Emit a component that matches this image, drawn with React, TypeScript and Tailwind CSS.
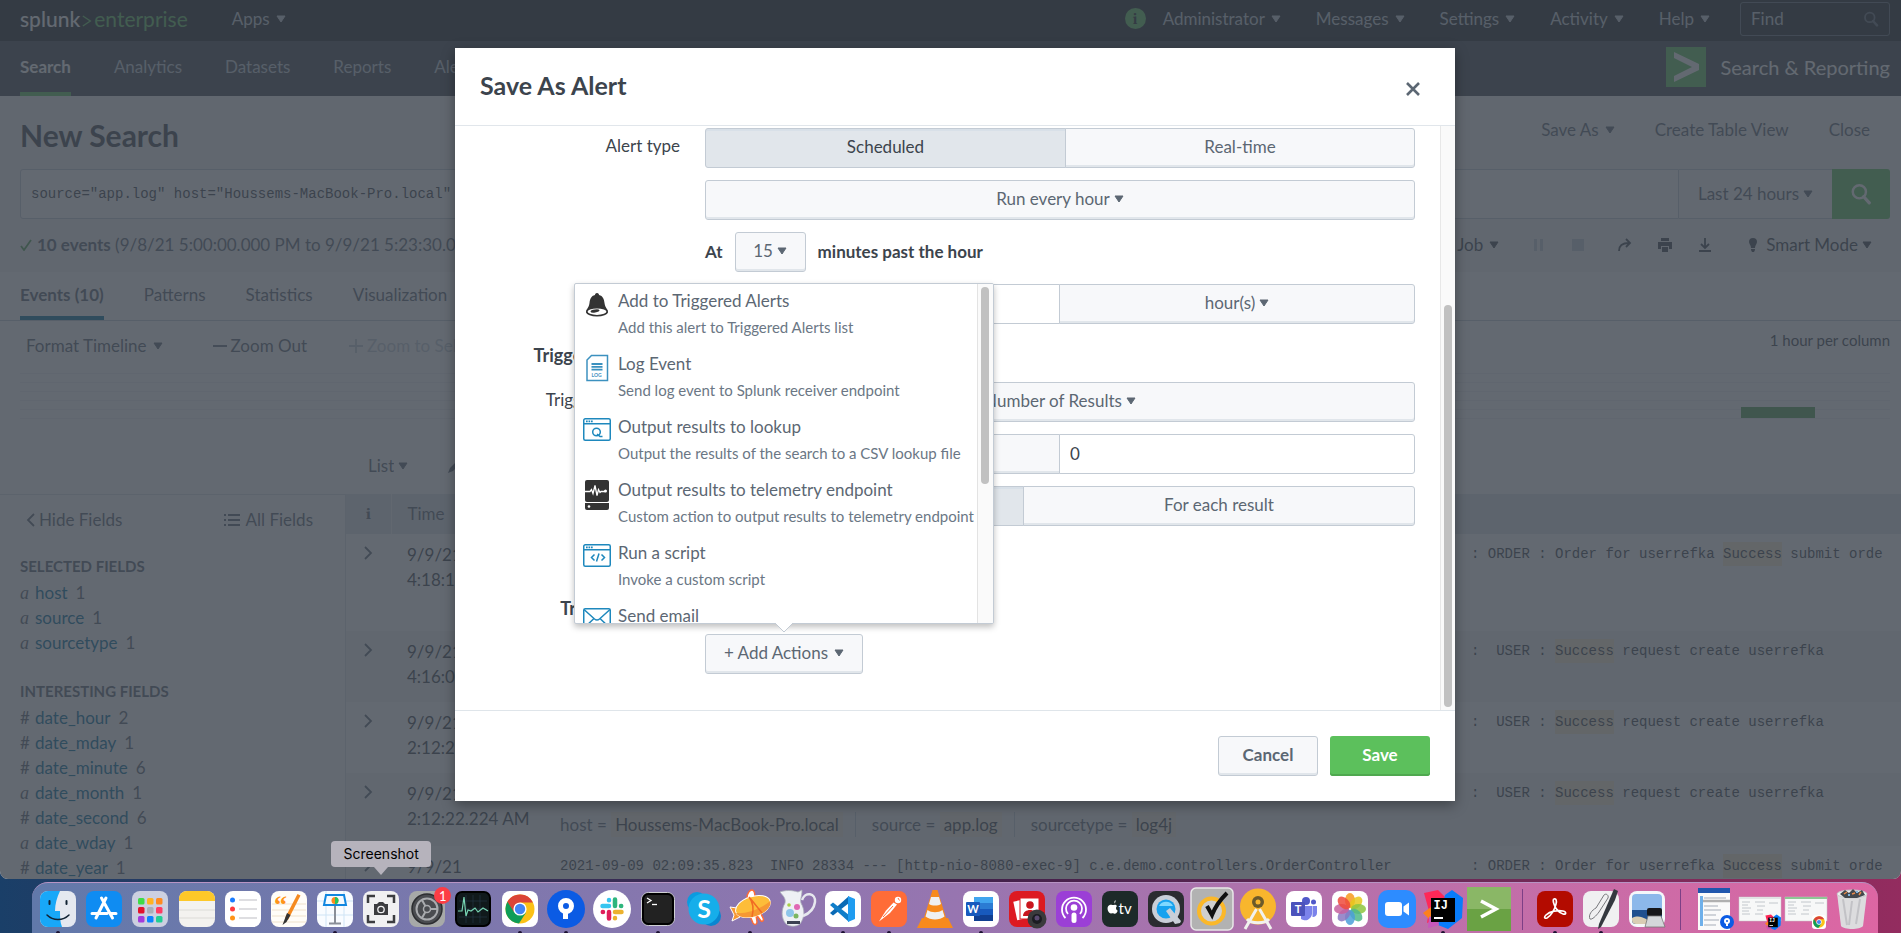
import type { ReactNode } from "react";

const Caret = ({ className = "" }: { className?: string }) => (
  <svg viewBox="0 0 10 8" className={`h-2 w-[10px] shrink-0 ${className}`} aria-hidden="true">
    <path d="M1 1h8L5 7z" fill="currentColor" stroke="currentColor" strokeLinejoin="round" />
  </svg>
);

const Magnifier = ({ className = "" }: { className?: string }) => (
  <svg viewBox="0 0 20 20" className={className} fill="none" stroke="currentColor" aria-hidden="true">
    <circle cx="8.5" cy="8" r="6" strokeWidth="2.2" />
    <path d="M12.5 12.5l5 5.5" strokeWidth="3" strokeLinecap="round" />
  </svg>
);

function MenuButton({ children }: { children: ReactNode }) {
  return (
    <button type="button" aria-haspopup="menu" className="flex items-center gap-[6px] whitespace-nowrap">
      {children}
      <Caret />
    </button>
  );
}

function Picker({ label, options, className = "" }: { label: string; options: string[]; className?: string }) {
  return (
    <div className={`flex items-center justify-center gap-1 ${className}`}>
      <select aria-label={label} className="appearance-none bg-transparent text-center outline-none [field-sizing:content]">
        {options.map((o) => (
          <option key={o}>{o}</option>
        ))}
      </select>
      <Caret />
    </div>
  );
}

/* ---------- page behind the dialog ---------- */

function TopBar() {
  return (
    <header className="flex h-[41px] items-center bg-[#171d21] pb-1 pl-5 pr-[11px] text-[#c3cbd4]">
      <a href="#home" className="flex items-center text-[21px] leading-6 text-white">
        <span className="font-medium">splunk</span>
        <svg viewBox="0 0 12 16" className="mx-[2px] mt-1 h-4 w-[10px]" fill="none" stroke="#5cc05c" strokeWidth="1.6" aria-hidden="true">
          <path d="M1 2l9 6-9 6" />
        </svg>
        <span className="text-[#5cc05c]">enterprise</span>
      </a>
      <div className="ml-11">
        <MenuButton>Apps</MenuButton>
      </div>
      <nav className="ml-auto flex items-center gap-[35px]">
        <div className="flex items-center gap-[17px]">
          <span className="flex size-[21px] items-center justify-center rounded-full bg-[#5cc05c] font-serif text-[15px] font-bold text-[#171d21]">i</span>
          <MenuButton>Administrator</MenuButton>
        </div>
        <MenuButton>Messages</MenuButton>
        <MenuButton>Settings</MenuButton>
        <MenuButton>Activity</MenuButton>
        <MenuButton>Help</MenuButton>
      </nav>
      <div className="ml-[30px] flex h-[34px] w-[150px] items-center rounded-[3px] border border-[#5c6773] px-[10px]">
        <input aria-label="Find" placeholder="Find" className="w-0 flex-1 bg-transparent placeholder:text-[#c3cbd4]" />
        <Magnifier className="size-4 text-[#5c6773]" />
      </div>
    </header>
  );
}

function AppNav() {
  return (
    <nav className="flex h-[55px] items-stretch bg-[#3c444d] pl-5 pr-[11px] text-[#c3cbd4]">
      <div className="flex gap-[43px]">
        <a href="#search" className="flex items-center border-b-4 border-[#5cc05c] pb-1 pt-1 font-bold text-white">Search</a>
        {["Analytics", "Datasets", "Reports", "Alerts"].map((t) => (
          <a key={t} href={`#${t.toLowerCase()}`} className="flex items-center pb-1">{t}</a>
        ))}
      </div>
      <div className="ml-auto flex items-center gap-[15px] pb-1 text-xl text-white">
        <svg viewBox="0 0 40 40" className="size-10" aria-hidden="true">
          <rect width="40" height="40" fill="#5cc05c" />
          <path d="M8 5l25 12v6L8 35v-6l18-9L8 11z" fill="#fff" />
        </svg>
        Search &amp; Reporting
      </div>
    </nav>
  );
}

function JobControls() {
  return (
    <div className="ml-auto flex items-center text-[#3c444d]">
      <MenuButton>Job</MenuButton>
      <svg viewBox="0 0 12 12" className="ml-[34px] size-3 text-[#c3cbd4]" fill="currentColor"><path d="M1 0h3v12H1zM7 0h3v12H7z" /></svg>
      <svg viewBox="0 0 12 12" className="ml-[27px] size-3 text-[#c3cbd4]" fill="currentColor"><path d="M0 0h12v12H0z" /></svg>
      <svg viewBox="0 0 14 14" className="ml-[34px] size-[14px]" fill="none" stroke="currentColor" strokeWidth="1.8"><path d="M1 13c0-5 3-8 10-8M8 1l4 4-4 4" /></svg>
      <svg viewBox="0 0 14 14" className="ml-[26px] size-[14px]" fill="currentColor"><path d="M3 0h8v3H3zM0 4h14v7h-3V8H3v3H0zM4 9h6v5H4z" /></svg>
      <svg viewBox="0 0 14 14" className="ml-[26px] size-[14px]" fill="none" stroke="currentColor" strokeWidth="1.8"><path d="M7 0v9M3 6l4 4 4-4M1 13h12" /></svg>
      <svg viewBox="0 0 10 14" className="ml-[36px] h-[14px] w-[10px]" fill="currentColor"><path d="M5 0a4 4 0 0 1 4 4c0 2-2 3-2 6H3c0-3-2-4-2-6a4 4 0 0 1 4-4zM3 11h4v1L6 14H4l-1-2z" /></svg>
      <Picker label="Search mode" options={["Smart Mode", "Fast Mode", "Verbose Mode"]} className="ml-2" />
    </div>
  );
}

function SearchSection() {
  return (
    <section className="h-[176px] px-5 pr-[11px]">
      <div className="flex h-[73px] items-center justify-between pt-1">
        <h1 className="text-[30px] font-bold text-[#3c444d]">New Search</h1>
        <div className="flex items-center gap-10 pb-[10px] pr-5">
          <MenuButton>Save As</MenuButton>
          <button type="button">Create Table View</button>
          <button type="button">Close</button>
        </div>
      </div>
      <div className="flex h-[50px]">
        <input
          aria-label="Search query"
          defaultValue={'source="app.log" host="Houssems-MacBook-Pro.local" sourcetype="log4j"'}
          className="min-w-0 flex-1 rounded-l-[3px] border border-[#c3cbd4] bg-white px-[10px] font-['Liberation_Mono',monospace] text-sm text-[#3c444d]"
        />
        <Picker label="Time range" options={["Last 24 hours", "All time"]} className="w-[153px] border-y border-[#c3cbd4] bg-[#f7f8fa]" />
        <button type="button" aria-label="Run search" className="flex w-[58px] items-center justify-center rounded-r-[3px] bg-[#5cc05c] text-white">
          <Magnifier className="size-[22px]" />
        </button>
      </div>
      <div className="flex h-[53px] items-center pb-[2px] pr-[18px]">
        <svg viewBox="0 0 12 12" className="mr-[5px] size-3" fill="none" stroke="#53a051" strokeWidth="1.8"><path d="M1 7l3 4 7-10" /></svg>
        <p className="whitespace-nowrap"><strong>10 events</strong> (9/8/21 5:00:00.000 PM to 9/9/21 5:23:30.000 PM)</p>
        <JobControls />
      </div>
    </section>
  );
}

function Timeline() {
  return (
    <section>
      <div role="tablist" className="flex h-[49px] items-stretch gap-10 border-b border-[#c3cbd4] px-5 pt-[2px]">
        <button type="button" role="tab" aria-selected="true" className="border-b-4 border-[#006d9c] font-bold">Events (10)</button>
        {["Patterns", "Statistics", "Visualization"].map((t) => (
          <button key={t} type="button" role="tab" aria-selected="false" className="pb-1">{t}</button>
        ))}
      </div>
      <div className="flex h-[52px] items-center pl-[26px] pr-[11px] pb-[2px]">
        <MenuButton>Format Timeline</MenuButton>
        <button type="button" className="ml-[50px] flex items-center gap-1">
          <svg viewBox="0 0 14 14" className="size-[14px]" stroke="currentColor" strokeWidth="1.8"><path d="M0 7h14" /></svg>
          Zoom Out
        </button>
        <button type="button" className="ml-[42px] flex items-center gap-1 text-[#c3cbd4]">
          <svg viewBox="0 0 14 14" className="size-[14px]" stroke="currentColor" strokeWidth="1.8"><path d="M0 7h14M7 0v14" /></svg>
          Zoom to Selection
        </button>
        <span className="ml-auto pb-3 text-[15px] text-[#3c444d]">1 hour per column</span>
      </div>
      <svg viewBox="0 0 1870 46" preserveAspectRatio="none" className="ml-5 block h-[46px] w-[calc(100%-31px)]" aria-label="Events over time">
        {[0, 9, 18, 27, 36, 45].map((y) => (
          <rect key={y} y={y} width="1870" height="1" fill="#eef1f3" />
        ))}
        <rect x="1721" y="34" width="74" height="11" fill="#53a051" />
      </svg>
      <div className="flex h-[75px] items-center gap-10 pl-[368px] pt-[18px]">
        <Picker label="Display" options={["List", "Raw", "Table"]} />
        <button type="button" className="flex items-center gap-1">
          <svg viewBox="0 0 14 14" className="size-[14px]" fill="currentColor"><path d="M0 14l2-5 8-8 3 3-8 8z" /></svg>
          Format
        </button>
      </div>
    </section>
  );
}

type Field = [kind: "a" | "#", name: string, count: number];
const selectedFields: Field[] = [["a", "host", 1], ["a", "source", 1], ["a", "sourcetype", 1]];
const interestingFields: Field[] = [
  ["#", "date_hour", 2], ["#", "date_mday", 1], ["#", "date_minute", 6], ["a", "date_month", 1],
  ["#", "date_second", 6], ["a", "date_wday", 1], ["#", "date_year", 1],
];

function FieldGroup({ title, fields }: { title: string; fields: Field[] }) {
  return (
    <div>
      <h2 className="mb-1 text-[15px] font-bold leading-5">{title}</h2>
      <ul>
        {fields.map(([kind, name, count]) => (
          <li key={name} className="flex h-[25px] items-center">
            <span className={kind === "a" ? "w-[15px] font-['Liberation_Serif',serif] text-lg italic" : "w-[15px]"}>{kind}</span>
            <a href={`#${name}`} className="text-[#006d9c]">{name}</a>
            <span className="ml-2">{count}</span>
          </li>
        ))}
      </ul>
    </div>
  );
}

const Hit = ({ children }: { children: ReactNode }) => <span className="bg-[#ffeecf] py-1">{children}</span>;

const userMessage = <>:&nbsp; USER : <Hit>Success</Hit> request create userrefka</>;
const orderMessage = <>: ORDER : Order for userrefka <Hit>Success</Hit> submit orde</>;

const events = [
  { time: "4:18:11.912 PM", log: "2021-09-09 16:18:11.912", message: orderMessage, height: "h-[97px]" },
  { time: "4:16:00.120 PM", log: "2021-09-09 16:16:00.120", message: userMessage, height: "h-[71px]" },
  { time: "2:12:22.225 AM", log: "2021-09-09 02:12:22.225", message: userMessage, height: "h-[71px]" },
  { time: "2:12:22.224 AM", log: "2021-09-09 02:12:22.224", message: userMessage, height: "h-[73px]" },
  { time: "2:09:35.823 AM", log: "2021-09-09 02:09:35.823", message: orderMessage, height: "h-[71px]" },
];

function Results() {
  return (
    <section className="flex">
      <aside className="w-[346px] shrink-0 border-r border-t border-[#d9dfe5] px-5 pr-8">
        <div className="flex h-[50px] items-center justify-between">
          <button type="button" className="ml-[6px] flex items-center gap-1">
            <svg viewBox="0 0 9 14" className="h-[14px] w-[9px]" fill="none" stroke="currentColor" strokeWidth="1.8"><path d="M8 1L2 7l6 6" /></svg>
            Hide Fields
          </button>
          <button type="button" className="flex items-center gap-[6px]">
            <svg viewBox="0 0 16 14" className="h-[14px] w-4" fill="currentColor"><path d="M0 1h2v2H0zM4 1h12v2H4zM0 6h2v2H0zM4 6h12v2H4zM0 11h2v2H0zM4 11h12v2H4z" /></svg>
            All Fields
          </button>
        </div>
        <div className="flex flex-col gap-[26px] pt-[11px]">
          <FieldGroup title="SELECTED FIELDS" fields={selectedFields} />
          <FieldGroup title="INTERESTING FIELDS" fields={interestingFields} />
        </div>
      </aside>
      <div className="min-w-0 flex-1 overflow-hidden">
        <table className="w-full table-fixed border-collapse text-left">
          <colgroup>
            <col className="w-[45px]" />
            <col className="w-[153px]" />
            <col />
          </colgroup>
          <thead>
            <tr className="h-10 bg-[#e1e6eb]">
              <th className="border-r border-[#f7f8fa] text-center font-serif font-bold">i</th>
              <th className="pl-4 font-normal">Time</th>
              <th className="pl-4 font-normal">Event</th>
            </tr>
          </thead>
          <tbody>
            {events.map((e, n) => (
              <tr key={e.time} className={n % 2 ? `bg-[#f2f4f5] align-top ${e.height}` : `align-top ${e.height}`}>
                <td className="pt-3">
                  <button type="button" aria-label="Expand event" className="mx-auto block">
                    <svg viewBox="0 0 9 14" className="h-[14px] w-[9px]" fill="none" stroke="currentColor" strokeWidth="1.8"><path d="M1 1l6 6-6 6" /></svg>
                  </button>
                </td>
                <td className="whitespace-nowrap pl-4 pt-2 leading-[25px] text-[#3c444d]">9/9/21<br />{e.time}</td>
                <td className="pl-4 pt-2">
                  <div className="flex whitespace-nowrap font-['Liberation_Mono',monospace] text-sm leading-[25px] text-[#3c444d]">
                    <span className="w-[911px] shrink-0">{e.log}&nbsp; INFO 28334 --- [http-nio-8080-exec-9] c.e.demo.controllers.OrderController</span>
                    <span>{e.message}</span>
                  </div>
                  <div className="flex items-center whitespace-nowrap pt-[6px] leading-[25px]">
                    host =&nbsp;<span className="bg-[#ffeecf]/60 px-1 text-[#3c444d]">Houssems-MacBook-Pro.local</span>
                    <span className="ml-3 border-l border-[#c3cbd4] pl-4">source =&nbsp;</span><span className="bg-[#ffeecf]/60 px-1 text-[#3c444d]">app.log</span>
                    <span className="ml-3 border-l border-[#c3cbd4] pl-4">sourcetype =&nbsp;</span><span className="bg-[#ffeecf]/60 px-1 text-[#3c444d]">log4j</span>
                  </div>
                </td>
              </tr>
            ))}
          </tbody>
        </table>
      </div>
    </section>
  );
}

/* ---------- dialog ---------- */

const box = "rounded-[3px] border border-[#c3cbd4] bg-[#f7f8fa] shadow-[inset_0_-2px_0_#e1e6eb] pb-[2px]";
const pressed = "rounded-l-[3px] border border-[#c3cbd4] bg-[#e1e6eb] pb-[2px] text-[#3c444d] shadow-[inset_0_2px_0_#d8e0e8]";
const field = "border border-[#c3cbd4] bg-white px-[10px] text-[#3c444d]";

function FormRow({ label, children }: { label?: string; children: ReactNode }) {
  return (
    <div className="flex gap-[25px]">
      <span className="flex h-9 w-[225px] shrink-0 items-center justify-end text-[#3c444d]">{label}</span>
      <div className="flex h-10 w-[710px] items-stretch">{children}</div>
    </div>
  );
}

const PopIcon = {
  bell: (
    <svg viewBox="0 0 28 28" className="h-7 w-7">
      <path d="M14 2c1.500 0 2 1 2 2 4 1 5 4 5.500 8 .5 3 1 4 3 7v3H3.500v-3c2-3 2.500-4 3-7C7 8 8 5 12 4c0-1 .5-2 2-2z" fill="#333" />
      <ellipse cx="14" cy="20.700" rx="10.200" ry="4" fill="#fff" stroke="#333" strokeWidth="1.600" />
      <ellipse cx="12" cy="20" rx="4.500" ry="1.600" fill="#333" transform="rotate(-8 12 20)" />
    </svg>
  ),
  log: (
    <svg viewBox="0 0 28 28" className="h-7 w-7" fill="none" stroke="#3c91bf" strokeWidth="1.500">
      <path d="M8.500 1.500H24.500v25H4V6z" fill="#fff" />
      <path d="M8.500 10h11M8.500 12.800h11M8.500 15.600h11" strokeWidth="1.800" />
      <text x="8.500" y="22.500" fontSize="5" fontWeight="bold" fill="#3c91bf" stroke="none" fontFamily="Lato">LOG</text>
    </svg>
  ),
  lookup: (
    <svg viewBox="0 0 28 28" className="h-7 w-7" fill="none" stroke="#1e88bd" strokeWidth="1.500">
      <rect x=".75" y="1.750" width="26.500" height="21.500" rx="1.500" fill="#fff" />
      <path d="M1 6.800h26" /><path d="M3 4.300h7" strokeDasharray="1.700 .8" strokeWidth="1.800" />
      <circle cx="13.500" cy="15" r="3.800" /><path d="M14 17l3 2.500h2.500" />
    </svg>
  ),
  telemetry: (
    <svg viewBox="0 0 28 30" className="h-[30px] w-7">
      <rect x="2" width="24" height="22" rx="2" fill="#333" />
      <path d="M2 23h24v5a2 2 0 0 1-2 2H4a2 2 0 0 1-2-2z" fill="#333" />
      <path d="M2 11.500h5l1.500-2 1.500 4 2-8 2 10 1.500-6 1.500 3 1-1h4.500" fill="none" stroke="#fff" strokeWidth="1.300" />
      <circle cx="22.500" cy="11" r="1.500" fill="#fff" /><circle cx="6" cy="26.500" r="1.300" fill="#fff" />
    </svg>
  ),
  script: (
    <svg viewBox="0 0 28 28" className="h-7 w-7" fill="none" stroke="#1e88bd" strokeWidth="1.500">
      <rect x=".75" y="1.750" width="26.500" height="21.500" rx="1.500" fill="#fff" />
      <path d="M1 6.800h26" /><path d="M3 4.300h7" strokeDasharray="1.700 .8" strokeWidth="1.800" />
      <path d="M11.500 11.500l-3 3 3 3M18.500 11.500l3 3-3 3M16 10.500l-2.500 8" />
    </svg>
  ),
  mail: (
    <svg viewBox="0 0 28 28" className="h-7 w-7" fill="none" stroke="#1e88bd" strokeWidth="1.500">
      <rect x=".75" y="2.750" width="26.500" height="20" rx="1.500" fill="#fff" />
      <path d="M1 3.500l10.500 9.500q2.500 2 5 0L27 3.500M1 22l10-9.500M27 22l-10-9.500" />
    </svg>
  ),
};

const actions = [
  { icon: PopIcon.bell, title: "Add to Triggered Alerts", text: "Add this alert to Triggered Alerts list" },
  { icon: PopIcon.log, title: "Log Event", text: "Send log event to Splunk receiver endpoint" },
  { icon: PopIcon.lookup, title: "Output results to lookup", text: "Output the results of the search to a CSV lookup file" },
  { icon: PopIcon.telemetry, title: "Output results to telemetry endpoint", text: "Custom action to output results to telemetry endpoint" },
  { icon: PopIcon.script, title: "Run a script", text: "Invoke a custom script" },
  { icon: PopIcon.mail, title: "Send email", text: "" },
];

function ActionsMenu() {
  return (
    <div className="absolute bottom-[50px] left-1/2 z-10 w-[420px] -translate-x-1/2 text-left">
      <div className="flex h-[341px] overflow-hidden rounded-[2px] border border-[#c3cbd4] bg-white shadow-[0_3px_6px_rgba(0,0,0,0.25)]">
        <ul className="min-w-0 flex-1">
          {actions.map((a) => (
            <li key={a.title} className="h-[63px]">
              <button type="button" className="flex w-full gap-[7px] pl-2 text-left">
                <span className="w-7 shrink-0 pt-[7px]">{a.icon}</span>
                <span className="whitespace-nowrap pt-1">
                  <span className="block leading-[26px]">{a.title}</span>
                  <span className="block text-[15px] leading-[26px] text-[#6b7785]">{a.text}</span>
                </span>
              </button>
            </li>
          ))}
        </ul>
        <div className="w-4 border-l border-[#e3e3e3] bg-[#fafafa] pl-[3px] pt-[3px]">
          <div className="h-[197px] w-2 rounded-full bg-[#c1c1c1]" />
        </div>
      </div>
      <svg viewBox="0 0 18 10" className="absolute left-1/2 top-[340px] h-[10px] w-[18px] -translate-x-1/2" aria-hidden="true">
        <path d="M0 0l9 9 9-9" fill="#fff" stroke="#c3cbd4" />
      </svg>
    </div>
  );
}

function SaveAlertDialog() {
  return (
    <div role="dialog" aria-labelledby="dialog-title" className="w-[1000px] max-w-full bg-white text-[#5c6773] shadow-[0_4px_12px_rgba(0,0,0,0.35)]">
      <div className="flex h-[78px] items-center justify-between border-b border-[#e1e6eb] pb-1 pl-[25px] pr-[35px]">
        <h2 id="dialog-title" className="text-[25px] font-bold text-[#3c444d]">Save As Alert</h2>
        <button type="button" aria-label="Close dialog" className="pt-2">
          <svg viewBox="0 0 14 14" className="size-[14px]" fill="none" stroke="#5c6773" strokeWidth="2.600"><path d="M1 1l12 12M13 1L1 13" /></svg>
        </button>
      </div>
      <div className="flex h-[585px] border-b border-[#dfe5ea]">
        <form className="flex flex-1 flex-col gap-3 pt-[2px]">
          <FormRow label="Alert type">
            <button type="button" aria-pressed="true" className={`${pressed} w-[361px]`}>Scheduled</button>
            <button type="button" aria-pressed="false" className={`${box} -ml-px flex-1 rounded-l-none`}>Real-time</button>
          </FormRow>
          <FormRow>
            <Picker label="Schedule" options={["Run every hour", "Run every day"]} className={`${box} flex-1`} />
          </FormRow>
          <FormRow>
            <div className="flex items-center font-bold text-[#3c444d]">
              At
              <Picker label="Minute" options={["15", "0", "30", "45"]} className={`${box} mx-3 h-10 w-[71px] font-normal text-[#5c6773]`} />
              minutes past the hour
            </div>
          </FormRow>
          <FormRow label="Expires">
            <input aria-label="Expires" defaultValue="24" className={`${field} w-[355px] rounded-l-[3px]`} />
            <Picker label="Expiry unit" options={["hour(s)", "day(s)"]} className={`${box} -ml-px flex-1 rounded-l-none`} />
          </FormRow>
          <h3 className="flex h-[34px] w-[225px] items-center justify-end pt-1 text-lg font-bold text-[#3c444d]">Trigger Conditions</h3>
          <FormRow label="Trigger alert when">
            <Picker label="Trigger alert when" options={["Number of Results", "Per-Result"]} className={`${box} flex-1`} />
          </FormRow>
          <FormRow>
            <Picker label="Comparison" options={["is greater than", "is less than"]} className={`${box} w-[355px] rounded-r-none`} />
            <input aria-label="Threshold" defaultValue="0" className={`${field} -ml-px min-w-0 flex-1 rounded-r-[3px]`} />
          </FormRow>
          <FormRow label="Trigger">
            <button type="button" aria-pressed="true" className={`${pressed} w-[319px]`}>Once</button>
            <button type="button" aria-pressed="false" className={`${box} -ml-px flex-1 rounded-l-none`}>For each result</button>
          </FormRow>
          <div className="mb-5 flex h-6 items-center gap-[25px]">
            <label htmlFor="throttle" className="w-[225px] text-right text-[#3c444d]">Throttle</label>
            <input id="throttle" type="checkbox" />
          </div>
          <h3 className="flex h-7 w-[225px] items-center justify-end text-lg font-bold text-[#3c444d]">Trigger Actions</h3>
          <FormRow>
            <div className="relative flex">
              <button type="button" aria-haspopup="menu" aria-expanded="true" className={`${box} flex w-[158px] items-center justify-center gap-[6px]`}>
                + Add Actions <Caret />
              </button>
              <ActionsMenu />
            </div>
          </FormRow>
        </form>
        <div className="flex w-[15px] items-end border-l border-[#e8e8e8] bg-[#fafafa] pb-[3px] pl-[3px]">
          <div className="h-[402px] w-2 rounded-full bg-[#c1c1c1]" />
        </div>
      </div>
      <div className="flex h-[90px] justify-end gap-3 pr-[25px] pt-[25px] font-bold">
        <button type="button" className={`${box} h-10 w-[100px]`}>Cancel</button>
        <button type="button" className="h-10 w-[100px] rounded-[3px] bg-[#5cc05c] pb-[2px] text-white shadow-[inset_0_-2px_0_#4fa84f]">Save</button>
      </div>
    </div>
  );
}

/* ---------- dock ---------- */

const Tile = ({ fill }: { fill: string }) => <rect x="2" y="2" width="36" height="36" rx="8" fill={fill} />;

const IJ = () => (
  <g>
    <path d="M1 4l14-3 8 8-6 20L4 34l2-12z" fill="#fe2857" />
    <path d="M0 24l8-6 6 12-5 3z" fill="#fc801d" />
    <path d="M22 6l7-5 11 8-1 20-14 11-10-4z" fill="#087cfa" />
    <path d="M6 28l8-2 2 10-11 3z" fill="#c757bc" />
    <rect x="8" y="9" width="24" height="24" fill="#000" />
    <text x="10.500" y="20" fontSize="12" fontWeight="bold" fill="#fff" fontFamily="Liberation Mono">IJ</text>
    <rect x="11" y="28" width="9" height="2" fill="#fff" />
  </g>
);

const Chrome = () => (
  <g>
    <circle cx="20" cy="20" r="14.500" fill="#fbc116" />
    <path d="M20 20L7.400 12.750A14.500 14.500 0 0 0 19 34.500L26 23.500z" fill="#0f9d58" />
    <path d="M20 13.400h12.900a14.500 14.500 0 0 0-25.500-.65L14 23z" fill="#db4437" />
    <circle cx="20" cy="20" r="6.600" fill="#fff" />
    <circle cx="20" cy="20" r="5.200" fill="#4285f4" />
  </g>
);

type DockIcon = { name: string; art: ReactNode; running?: boolean; badge?: string; tip?: string };

const launchColors = ["#3fdc46", "#ffb321", "#ff8a1f", "#e3122c", "#a9aeb8", "#ff3b63", "#a33bdc", "#0a84ff", "#22cf94"];

const dockApps: DockIcon[] = [
  { name: "Finder", running: true, art: <><Tile fill="#e4e8f0" /><path d="M10 2h12c-3 6-5 13-5 20h5c0 6 0 11 2 16H10a8 8 0 0 1-8-8V10a8 8 0 0 1 8-8z" fill="#18a8f8" /><path d="M11.500 12v3M28.500 12v3" stroke="#123" strokeWidth="2" strokeLinecap="round" /><path d="M9 26c6 6 16 6 22 0" fill="none" stroke="#123" strokeWidth="1.500" strokeLinecap="round" /></> },
  { name: "App Store", art: <><Tile fill="#0f8cf2" /><path d="M22 9L12 29M17.500 9L28.500 29M8 24.500h15M27 24.500h5" stroke="#fff" strokeWidth="3" strokeLinecap="round" /></> },
  { name: "Launchpad", art: <><Tile fill="#ccd0e0" />{launchColors.map((c, i) => <rect key={c} x={8 + (i % 3) * 9} y={9 + Math.floor(i / 3) * 9} width="6.500" height="6.500" rx="1.500" fill={c} />)}</> },
  { name: "Notes", art: <><Tile fill="#f3f2ef" /><path d="M2 12V10a8 8 0 0 1 8-8h20a8 8 0 0 1 8 8v2z" fill="#fdc829" /><path d="M2 21h36M2 29h36" stroke="#dcdbd7" /></> },
  { name: "Reminders", art: <><Tile fill="#fff" /><circle cx="9.500" cy="11" r="2.500" fill="#1a7cff" /><circle cx="9.500" cy="20" r="2.500" fill="#ff3b3f" /><circle cx="9.500" cy="29" r="2.500" fill="#ff9417" /><path d="M16 11h18M16 20h18M16 29h18" stroke="#d4d4d8" strokeWidth="1.500" /></> },
  { name: "Pages", art: <><Tile fill="#fffdf8" /><path d="M3 15h34M3 21h34M3 27h34M3 33h34" stroke="#efe2cd" /><text x="5" y="24" fontSize="26" fill="#ff9417" fontFamily="Liberation Serif" fontWeight="bold">“</text><path d="M28.500 5l3 1.500L19 31l-3-2z" fill="#f58a1f" /><path d="M18 24l3.500 2-4 7-4 3z" fill="#333" /></> },
  { name: "Keynote", running: true, art: <><Tile fill="#f9fcff" /><path d="M2 12h36M2 26h36M11 2v36M29 2v36" stroke="#cfe4f5" /><path d="M11 6h18l2 10H9z" fill="#f5fbff" stroke="#1187e0" strokeWidth="2" /><circle cx="20" cy="11.500" r="3.500" fill="#ff8a1f" /><path d="M20 11.500V8a3.500 3.500 0 0 1 0 7z" fill="#23c55e" /><path d="M20 17v17M14 34.500h12" stroke="#8a8f98" strokeWidth="2" /></> },
  { name: "Screenshot", tip: "Screenshot", art: <><Tile fill="#f1f1f2" /><path d="M7 14V7h7M26 7h7v7M33 26v7h-7M14 33H7v-7" fill="none" stroke="#3c3d40" strokeWidth="2.500" /><path d="M13 15h3l2-2h4l2 2h3v11H13z" fill="#3c3d40" /><circle cx="20" cy="20.500" r="3.200" fill="none" stroke="#f1f1f2" strokeWidth="1.300" /></> },
  { name: "System Preferences", badge: "1", art: <><Tile fill="#a7a9a8" /><circle cx="20" cy="20" r="15" fill="#4a4c50" stroke="#2c2d30" strokeWidth="1.500" /><circle cx="20" cy="20" r="10.500" fill="none" stroke="#a9abae" strokeWidth="2" /><path d="M20 20L30 20M20 20l-5-9M20 20l-5 9" stroke="#a9abae" strokeWidth="2" /><circle cx="20" cy="20" r="3.500" fill="#4a4c50" stroke="#a9abae" strokeWidth="1.500" /></> },
  { name: "Activity Monitor", art: <><rect x="3" y="3" width="34" height="34" rx="6" fill="#10191b" stroke="#000" strokeWidth="2" /><path d="M6 12h28M6 20h28M6 28h28M13 6v28M20 6v28M27 6v28" stroke="#234" strokeWidth=".7" /><path d="M5 22h4l2-14 2 19 2-6 3 1 4-3 3 4 5-4 5 3" fill="none" stroke="#78d6b4" strokeWidth="1.200" /></> },
  { name: "Chrome", running: true, art: <><Tile fill="#fff" /><Chrome /></> },
  { name: "Sourcetree", running: true, art: <><circle cx="20" cy="20" r="19" fill="#0b5be4" /><circle cx="20" cy="17" r="5.500" fill="none" stroke="#fff" strokeWidth="5" /><path d="M17 22h5v8h-5z" fill="#fff" /></> },
  { name: "Slack", art: <><circle cx="20" cy="20" r="19" fill="#fff" /><g strokeWidth="4.500" strokeLinecap="round"><path d="M10.500 17H17M17 11v.2" stroke="#36c5f0" /><path d="M23 10.500V17M29 17h.2" stroke="#2eb67d" /><path d="M23 23h6.500M23 29v.2" stroke="#ecb22e" /><path d="M17 23v6.500M10.800 23h.2" stroke="#e01e5a" /></g></> },
  { name: "Terminal", running: true, art: <><rect x="3.500" y="3.500" width="33" height="33" rx="7" fill="#222" stroke="#cfd0d4" strokeWidth="1" /><rect x="5" y="5" width="30" height="30" rx="5.500" fill="#222" stroke="#000" strokeWidth="2" /><path d="M9 9l4 2.500L9 14" fill="none" stroke="#fff" strokeWidth="1.300" /><path d="M14 15.500h5" stroke="#fff" strokeWidth="1.300" /></> },
  { name: "Skype", art: <><circle cx="13" cy="13" r="10" fill="#0a9be0" /><circle cx="27" cy="27" r="10" fill="#0a86d0" /><circle cx="20" cy="20" r="15.500" fill="#16aeea" /><text x="20" y="28.500" fontSize="25" fontWeight="bold" fill="#fff" textAnchor="middle" fontFamily="Lato">S</text></> },
  {
    name: "Zeplin",
    running: true,
    art: (
      <>
        <path d="M17 9c0-5 3-8 5-8s3 4 3 8zM20 27l3 7c1 2 4 2 4-1l-1-7zM25 24l6 8c2 1 3-1 2-3l-4-8z" fill="#fff" stroke="#ff6b35" strokeWidth="1.500" />
        <path d="M0 18l7 1 3 9-8 4 2-6z" fill="#f69833" stroke="#fff" strokeWidth="1" />
        <ellipse cx="23" cy="17.500" rx="18" ry="10" transform="rotate(-18 23 17.500)" fill="#fdbd39" stroke="#fff" strokeWidth="1" />
        <path d="M6 24c10 1 23-3 34.500-12 1 7-7 13-16 15.500-8 2-16 1-18.500-3.500z" fill="#f69833" />
        <path d="M19 8c4 5 5 12 3 20M20 9l12 15" fill="none" stroke="#f16b24" strokeWidth="1.500" />
      </>
    ),
  },
  { name: "Pitcher", art: <><path d="M3 3c5-2 12-2 18 0l4-2c0 7-2 9-1 13 4 7 4 14-1 21-4 3-10 3-14 0-5-6-5-14-1-21 1-5-2-7-5-11z" fill="#eef0f4" stroke="#a9adb8" strokeWidth=".8" /><path d="M25 11c3-9 14-7 13 2-1 8-7 12-12 14" fill="none" stroke="#e6e8ee" strokeWidth="2.500" /><circle cx="13" cy="24" r="4" fill="#8ec5ea" /><circle cx="20" cy="18" r="3" fill="#e067b4" /><circle cx="19" cy="27" r="2.500" fill="#7bb661" /><circle cx="12" cy="16" r="1.800" fill="#a8cf45" /><path d="M10 33.500h13" stroke="#3c4152" strokeWidth="3" /></> },
  { name: "Visual Studio Code", running: true, art: <><Tile fill="#fff" /><path d="M26 7v7L10 26.500l-3-2.500z" fill="#0a6ab5" /><path d="M26 33v-7L10 13.500 7 16z" fill="#0f7dc9" /><path d="M25 7l7 3v20l-7 3z" fill="#1f9cf0" /></> },
  { name: "Postman", running: true, art: <><Tile fill="#ff6c37" /><circle cx="29" cy="11" r="3.200" fill="#fff" /><path d="M24.500 13.500l3.500 2-7 8.500-11 8.500 7-11z" fill="#fff" /><path d="M24 17l-10 11M29 9l1.500 2.500" stroke="#ff6c37" strokeWidth="1" /></> },
  { name: "VLC", art: <><path d="M7 29h26l5 10H2z" fill="#f78a1d" /><path d="M17.500 1h5L32 32c-5 4-19 4-24 0z" fill="#f78a1d" /><path d="M16 8h8l2 7c-3 2-9 2-12 0zM12.500 21c4 3 11 3 15 0l2 6.500c-5 4-14 4-19 0z" fill="#eff0f2" /></> },
  { name: "Word", running: true, art: <><Tile fill="#fff" /><path d="M13 8h19v6H13z" fill="#41a5ee" /><path d="M13 14h19v6H13z" fill="#2b7cd3" /><path d="M13 20h19v6H13z" fill="#185abd" /><path d="M13 26h19v6H13z" fill="#103f91" /><rect x="5" y="13" width="14" height="14" rx="1" fill="#185abd" /><text x="12" y="24" fontSize="11" fontWeight="bold" fill="#fff" textAnchor="middle">W</text></> },
  { name: "Photo Booth", art: <><Tile fill="#dd1a22" /><rect x="8" y="11" width="14" height="19" fill="#fff" transform="rotate(-12 15 20)" /><rect x="13" y="9" width="19" height="21" fill="#fff" stroke="#dd1a22" /><circle cx="23" cy="16" r="3.800" fill="#c9161d" /><path d="M16 27c0-8 14-8 14 0z" fill="#c9161d" /><circle cx="30" cy="30" r="9.500" fill="#3a3a3c" /><circle cx="30" cy="30" r="5" fill="#1b1c22" /><circle cx="30" cy="29" r="2.500" fill="#5a4a70" /></> },
  { name: "Podcasts", art: <><Tile fill="#9b3fd6" /><g fill="none" stroke="#fff" strokeWidth="1.800"><path d="M11.500 29a12 12 0 1 1 17 0M14 25a8 8 0 1 1 12 0" /></g><circle cx="20" cy="18.500" r="3.300" fill="#fff" /><rect x="17.500" y="23.500" width="5" height="10.500" rx="2.500" fill="#fff" /></> },
  { name: "TV", art: <><Tile fill="#1d2a29" /><path d="M14.500 14.500c.2-1.500-.6-2.200 1-3.500.2 1.800-.3 2.800-1 3.500zM17 17c-1.500 1-1.300 4 .7 4.800-.8 2.400-2.300 3.400-3.900 2.700-1-.4-1.500-.4-2.500 0C9 25 6.500 20.500 8 17.500c1-2 3-2.200 4.300-1.500 1 .4 3.200-1.500 4.700 1z" fill="#fff" /><text x="18.500" y="25" fontSize="15" fill="#fff" fontFamily="Lato">tv</text></> },
  { name: "QuickTime Player", art: <><Tile fill="#2b2c30" /><circle cx="20" cy="20" r="14" fill="#c9cfd8" /><circle cx="20" cy="20" r="9.500" fill="#17a2ef" /><path d="M13 17a8 8 0 0 1 14 0z" fill="#7fd8ff" /><path d="M20 22l4-3 11 13-1 2-5 1z" fill="#c9cfd8" /></> },
  { name: "Norton", art: <><rect x="-1" y="-1" width="42" height="42" rx="5" fill="#b2b2b2" stroke="#e8e8e8" strokeWidth="1.500" /><circle cx="19.500" cy="22" r="12.500" fill="#cfcfcf" stroke="#fbb829" strokeWidth="4" /><path d="M15 17l5 9c3-8 9-16 15-22" fill="none" stroke="#111" strokeWidth="4" /></> },
  { name: "Android Studio", art: <><circle cx="20" cy="17.500" r="18" fill="#f8b62d" /><circle cx="20" cy="13" r="6" fill="#6b5a2a" /><circle cx="20" cy="13" r="2.500" fill="#f8b62d" /><path d="M18.500 20L7 40M21.500 20L33 40M9 30c4 5 18 5 22 0" fill="none" stroke="#f1f1ee" strokeWidth="3" /></> },
  { name: "Teams", art: <><Tile fill="#fff" /><circle cx="22" cy="12" r="4" fill="#5059c9" /><circle cx="29.500" cy="13" r="2.500" fill="#5059c9" /><path d="M17 17h11v8a7 7 0 0 1-11 5zM28.500 17H33v7a4 4 0 0 1-4.500 4z" fill="#7b83eb" /><rect x="7" y="13" width="14" height="14" rx="1" fill="#4b53bc" /><text x="14" y="24" fontSize="11" fontWeight="bold" fill="#fff" textAnchor="middle">T</text></> },
  { name: "Photos", art: <><Tile fill="#fff" />{["#f79a1e", "#e8c81c", "#8ec63f", "#4fb98a", "#4b9fd8", "#8a78c2", "#c7609f", "#ee4a3c"].map((c, i) => <ellipse key={c} cx="20" cy="11.500" rx="5" ry="7.500" fill={c} fillOpacity=".85" transform={`rotate(${i * 45} 20 20)`} />)}</> },
  { name: "Zoom", art: <><rect x="1" y="1" width="38" height="38" rx="10" fill="#2d8cff" /><rect x="8" y="13" width="17" height="14" rx="3" fill="#fff" /><path d="M26.500 17.500L32 13.500v13l-5.500-4z" fill="#fff" /></> },
  { name: "IntelliJ IDEA", running: true, art: <IJ /> },
  { name: "Splunk", art: <><rect x="-2" y="-2" width="44" height="44" fill="#6aa244" /><rect x="-2" y="-2" width="44" height="22" fill="#8ab766" /><path d="M12 12l15 8-15 8" fill="none" stroke="#fff" strokeWidth="3.500" /></> },
];

const dockRecent: DockIcon[] = [
  { name: "Acrobat", running: true, art: <><Tile fill="#b30b00" /><path d="M19 10c2-1 3 2 2 5-1 5-5 12-9 14-3 1-3-1-1-3 4-4 12-5 17-4 4 1 3 4 0 3-4-1-8-6-9-10-1-3-1-5 0-5z" fill="none" stroke="#fff" strokeWidth="1.700" /></> },
  { name: "Script Editor", running: true, art: <><Tile fill="#f0f0f1" /><path d="M9 30c-2-4 2-9 6-11l8-13c2-2 5 0 4 3l-9 14c-3 4-7 8-9 7z" fill="none" stroke="#77787c" strokeWidth="1" /><path d="M33 0l4 2-3 9-14 27-3 2 1-5z" fill="#34383f" /></> },
  { name: "Preview", art: <><Tile fill="#f5f7fa" /><rect x="5" y="5" width="30" height="30" rx="4" fill="#8cb8ea" /><path d="M5 21h30v10a4 4 0 0 1-4 4H9a4 4 0 0 1-4-4z" fill="#20508f" /><path d="M5 29c8-4 15 1 20 6H9a4 4 0 0 1-4-4z" fill="#d9cdb4" /><rect x="20" y="19" width="15" height="8" rx="2" fill="#16171a" /><path d="M21 27h13l4 11H18z" fill="#d4d7da" stroke="#777" strokeWidth=".8" /></> },
];

const WindowLines = ({ color }: { color: string }) => (
  <>
    <rect x="-1" y="8" width="42" height="24" fill="#f7f8f8" stroke="#c5c8c8" strokeWidth=".5" />
    <rect x="-1" y="8" width="42" height="2" fill={color} />
    <path d="M2 13h8M2 16h6M2 19h9M2 22h7M2 25h8M15 13h10M17 17h8M17 21h6M15 25h8M29 14h9" stroke="#b5bac0" strokeWidth=".8" />
  </>
);

const dockWindows: DockIcon[] = [
  { name: "Sourcetree window", art: <><rect x="4" y="-1" width="32" height="42" fill="#fafafa" /><rect x="4" y="-1" width="32" height="5" fill="#1f56ad" /><path d="M10 9h22M10 17h14M10 21h17M10 26h12M10 31h15M10 36h12" stroke="#a6adb8" /><path d="M6 7h3v30H6z" fill="#6fb0ea" /><path d="M9 12h27" stroke="#b0b0b0" strokeWidth="2.500" /><circle cx="33" cy="33" r="7" fill="#0b5be4" /><circle cx="33" cy="32" r="2" fill="none" stroke="#fff" strokeWidth="2" /><path d="M32 33h2v4h-2z" fill="#fff" /></> },
  { name: "IntelliJ window", art: <><WindowLines color="#e2e4e4" /><g transform="translate(25 25) scale(.4)"><IJ /></g></> },
  { name: "Chrome window", art: <><WindowLines color="#8fc796" /><rect x="26" y="26" width="14" height="14" rx="3" fill="#fff" /><g transform="translate(25 25) scale(.4)"><Chrome /></g></> },
  { name: "Trash", art: <><path d="M5 4h30l-4 33c-3 4-19 4-22 0z" fill="#dcdcde" /><path d="M11 10l4 26M20 12l-3 24M28 10l-4 25" stroke="#c2c2c6" strokeWidth="2" /><ellipse cx="20" cy="5" rx="15" ry="4" fill="#eee" stroke="#c8c8cc" /><path d="M8 5l5-4 4 3 4-4 4 4 5-3 3 5-8 3H13z" fill="#44484e" /><path d="M12 5l3-2M20 5l3-1M27 6l2-3" stroke="#e8894a" strokeWidth="1.500" /><path d="M16 6h2M24 3h2" stroke="#7fb4de" strokeWidth="2" /></> },
];

function DockItem({ icon }: { icon: DockIcon }) {
  return (
    <li className="relative flex flex-1 justify-center">
      <button type="button" aria-label={icon.name} className="mt-[6px] h-10">
        <svg viewBox="0 0 40 40" className="size-10 overflow-visible">{icon.art}</svg>
      </button>
      {icon.running && <span className="absolute left-1/2 top-12 size-1 -translate-x-1/2 rounded-full bg-[#1b1030]" />}
      {icon.badge && (
        <span className="absolute left-[30px] top-1 flex size-[17px] items-center justify-center rounded-full bg-[#fc3d45] text-[13px] text-white">{icon.badge}</span>
      )}
      {icon.tip && (
        <span className="absolute bottom-[66px] left-1/2 flex h-[26px] w-[100px] -translate-x-1/2 items-center justify-center rounded bg-[#b6b3bc] font-[Inter,sans-serif] text-sm text-black">
          {icon.tip}
          <svg viewBox="0 0 14 8" className="absolute left-1/2 top-[26px] h-2 w-[14px] -translate-x-1/2" aria-hidden="true"><path d="M0 0h14L7 8z" fill="#b6b3bc" /></svg>
        </span>
      )}
    </li>
  );
}

const DockDivider = () => <li aria-hidden="true" className="mt-[6px] flex h-[41px] w-5 justify-center"><span className="w-px bg-[#7d3f86]" /></li>;

function Dock() {
  return (
    <ul className="relative z-20 ml-8 mr-[23px] mt-[3px] flex h-[51px] shrink-0 rounded-t-[16px] border-t border-[#b794c4] bg-linear-to-r from-[#6179aa] via-[#9775b0] to-[#dd66a3] px-[3px]">
      {dockApps.map((i) => <DockItem key={i.name} icon={i} />)}
      <DockDivider />
      {dockRecent.map((i) => <DockItem key={i.name} icon={i} />)}
      <DockDivider />
      {dockWindows.map((i) => <DockItem key={i.name} icon={i} />)}
    </ul>
  );
}

export default function App() {
  return (
    <div className="flex h-screen flex-col overflow-hidden bg-linear-to-r from-[#1a3f68] via-[#40204a] to-[#932c5f] font-[Lato,sans-serif] text-[17px] leading-6">
      <main className="relative min-h-0 flex-1 overflow-hidden rounded-b-[8px] bg-white text-[#5c6773]">
        <div className="bg-[#f2f4f5]">
          <TopBar />
          <AppNav />
          <SearchSection />
        </div>
        <Timeline />
        <Results />
        <div className="absolute inset-0 flex items-start justify-center bg-[#3c444d]/80 pl-[9px] pt-12">
          <SaveAlertDialog />
        </div>
      </main>
      <Dock />
    </div>
  );
}
